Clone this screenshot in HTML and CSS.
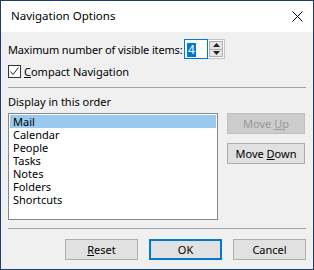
FILE: index.html
```html
<!DOCTYPE html>
<html>
<head>
<meta charset="utf-8">
<link rel="stylesheet" href="styles.css">
</head>
<body>
<div class="dialog">
  <div class="titlebar">
    <span class="title">Navigation Options</span>
    <svg class="close" width="11" height="11" viewBox="0 0 11 11"><path d="M0.5 0.5 L10.5 10.5 M10.5 0.5 L0.5 10.5" stroke="#000" stroke-width="1" fill="none"/></svg>
  </div>
  <div class="content">
    <div class="row-max">
      <span class="label max-label">Maximum number of visible items:</span>
      <div class="spinner">
        <div class="spin-input"><span class="sel">4</span></div>
        <div class="spin-btns">
          <div class="spin-btn"><svg width="7" height="4" viewBox="0 0 7 4"><path d="M3.5 0 L7 4 L0 4 Z" fill="#222"/></svg></div>
          <div class="spin-btn"><svg width="7" height="4" viewBox="0 0 7 4"><path d="M0 0 L7 0 L3.5 4 Z" fill="#222"/></svg></div>
        </div>
      </div>
    </div>
    <div class="row-check">
      <div class="checkbox"><svg width="11" height="11" viewBox="0 0 11 11"><path d="M1.5 5.5 L4 8.5 L9.5 1.5" stroke="#222" stroke-width="1" fill="none"/></svg></div>
      <span class="label"><u>C</u>ompact Navigation</span>
    </div>
    <div class="sep sep1"></div>
    <div class="order-label">Display in this order</div>
    <div class="row-list">
      <div class="listbox">
        <div class="item selected">Mail</div>
        <div class="item">Calendar</div>
        <div class="item">People</div>
        <div class="item">Tasks</div>
        <div class="item">Notes</div>
        <div class="item">Folders</div>
        <div class="item">Shortcuts</div>
      </div>
      <div class="side-btns">
        <div class="btn disabled"><span>Move <u>U</u>p</span></div>
        <div class="btn"><span>Move <u>D</u>own</span></div>
      </div>
    </div>
    <div class="sep sep2"></div>
    <div class="row-footer">
      <div class="btn foot"><span><u>R</u>eset</span></div>
      <div class="btn foot default"><span>OK</span></div>
      <div class="btn foot"><span>Cancel</span></div>
    </div>
  </div>
</div>
</body>
</html>
```
FILE: styles.css
```css
* { box-sizing: border-box; }
html, body { margin: 0; padding: 0; }
body {
  font-family: "Noto Sans", "Open Sans", sans-serif;
  font-size: 11px;
  color: #000;
  background: #f0f0f0;
}
.dialog {
  width: 314px;
  height: 270px;
  border: 1px solid #1d3d6b;
  background: #f0f0f0;
  display: flex;
  flex-direction: column;
}
.titlebar {
  height: 31px;
  background: #fff;
  display: flex;
  align-items: center;
  justify-content: space-between;
  padding: 0 10px 0 10px;
  flex-shrink: 0;
}
.title {
  font-size: 11.5px;
  margin-top: -2px;
}
.close { margin-top: -1px; }
.content {
  padding: 0 7px;
  display: flex;
  flex-direction: column;
}
.label { white-space: nowrap; }
.max-label { letter-spacing: -0.15px; }
.row-max {
  margin-top: 7px;
  height: 20px;
  display: flex;
  align-items: center;
}
.spinner {
  display: flex;
  height: 20px;
  margin-left: auto;
  margin-right: 81px;
}
.spin-input {
  width: 24px;
  height: 20px;
  border: 1px solid #0078d7;
  background: #fff;
  padding: 2px 0 0 2px;
}
.sel {
  display: inline-block;
  background: #0078d7;
  color: #fff;
  height: 14px;
  line-height: 14px;
  padding: 0 1px;
  font-size: 12px;
}
.spin-btns {
  width: 17px;
  height: 20px;
  display: flex;
  flex-direction: column;
  border: 1px solid #c4c4c4;
  border-left: none;
  background: #fff;
  padding: 1px;
}
.spin-btn {
  flex: 1;
  background: #e5e5e5;
  border: 1px solid #acacac;
  display: flex;
  align-items: center;
  justify-content: center;
}
.spin-btn + .spin-btn { border-top: none; }
.row-check {
  margin-top: 5px;
  height: 15px;
  display: flex;
  align-items: center;
}
.checkbox {
  width: 13px;
  height: 13px;
  border: 1px solid #333;
  background: #fff;
  margin-right: 3px;
  display: flex;
}
.sep {
  height: 1px;
  background: #a0a0a0;
}
.sep1 { margin-top: 8px; }
.order-label {
  margin-top: 7px;
  height: 14px;
  line-height: 14px;
}
.row-list {
  margin-top: 4px;
  display: flex;
  gap: 9px;
}
.listbox {
  width: 210px;
  height: 107px;
  border: 1px solid #828790;
  background: #fff;
  padding: 1px;
}
.item {
  height: 13px;
  line-height: 13px;
  padding-left: 3px;
}
.item.selected { background: #99c9ef; }
.side-btns {
  display: flex;
  flex-direction: column;
  gap: 9px;
}
.btn {
  width: 78px;
  height: 21px;
  border: 1px solid #adadad;
  background: #e1e1e1;
  display: flex;
  align-items: center;
  justify-content: center;
  white-space: nowrap;
}
.btn.disabled {
  background: #cccccc;
  border-color: #bfbfbf;
  color: #999999;
}
.sep2 { margin-top: 8px; }
.row-footer {
  margin-top: 10px;
  display: flex;
  justify-content: flex-end;
  gap: 11px;
}
.btn.foot { width: 73px; height: 21px; }
.btn.default { border: 2px solid #0078d7; }
```
